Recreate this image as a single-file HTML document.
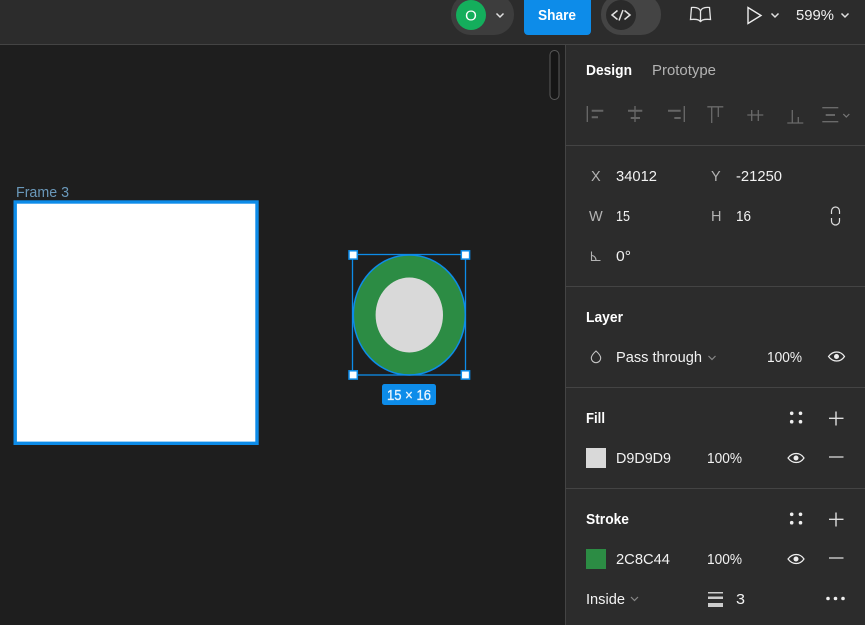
<!DOCTYPE html>
<html><head><meta charset="utf-8"><style>
html,body{margin:0;padding:0;background:#1e1e1e;width:865px;height:625px;overflow:hidden}
svg{display:block}
text{font-family:"Liberation Sans",sans-serif;font-size:14.500px;fill:#f2f2f2}
.b{font-weight:700;fill:#fff}
.m{fill:#b3b3b3}
.g{fill:none;stroke:#666;stroke-width:2}
.t{fill:none;stroke:#6a6a6a;stroke-width:1.300}
.c{fill:none;stroke:#e0e0e0;stroke-width:1.500}
.l{fill:#444}
</style></head><body>
<svg width="865" height="625" viewBox="0 0 865 625" xmlns="http://www.w3.org/2000/svg">
<rect width="865" height="625" fill="#1e1e1e"/>
<rect width="865" height="44" fill="#2c2c2c"/>
<rect y="44" width="865" height="1" fill="#444"/>
<rect x="565" y="45" width="300" height="580" fill="#2c2c2c"/>
<rect x="565" y="45" width="1" height="580" fill="#444"/>
<rect x="566" y="145" width="299" height="1" class="l"/>
<rect x="566" y="286" width="299" height="1" class="l"/>
<rect x="566" y="387" width="299" height="1" class="l"/>
<rect x="566" y="488" width="299" height="1" class="l"/>

<!-- top bar -->
<rect x="451" y="-6" width="63" height="41" rx="20" fill="#3d3d3d"/>
<circle cx="471" cy="15" r="15" fill="#14ae5c"/>
<text x="471" y="20.500" text-anchor="middle" style="font-size:15px;fill:#fff">O</text>
<path class="c" d="M496.500 13.500l3.500 3.500 3.500-3.500"/>
<path d="M524 0H591V31a4 4 0 0 1-4 4H528a4 4 0 0 1-4-4Z" fill="#0d8ce9"/>
<text x="538" y="20" class="b" textLength="38" lengthAdjust="spacingAndGlyphs">Share</text>
<rect x="601" y="-6" width="60" height="41" rx="20" fill="#444"/>
<circle cx="621" cy="15" r="15" fill="#2a2a2a"/>
<path class="c" d="M617.500 10.500l-5.500 4.500 5.500 4.500M624.500 10.500l5.500 4.500-5.500 4.500M623 10l-4 10.500"/>
<path d="M700.500 11c-1-2.500-4-4-9-3.500l-1 12q5-.5 8 .5l2 1.500 2-1.500q3-1 8-.5l-1-12c-5-.5-8 1-9 3.500ZM700.500 11v10" fill="none" stroke="#e6e6e6" stroke-width="1.300"/>
<path d="M748 7.500V23.500L761 15.500Z" fill="none" stroke="#eee" stroke-width="1.400"/>
<path class="c" d="M771.500 13.500l3.500 3.500 3.500-3.500"/>
<text x="796" y="20" textLength="38" lengthAdjust="spacingAndGlyphs">599%</text>
<path class="c" d="M841.500 13.500l3.500 3.500 3.500-3.500"/>

<!-- scrollbar -->
<rect x="550" y="50.500" width="9" height="49" rx="4.500" fill="#161616" stroke="#5a5a5a" stroke-width="1"/>

<!-- frame -->
<text x="16" y="197" style="fill:#6a98ba" textLength="53" lengthAdjust="spacingAndGlyphs">Frame 3</text>
<rect x="15.200" y="202" width="241.800" height="241.300" fill="#fff" stroke="#0d8ce9" stroke-width="3.400"/>

<!-- ellipse -->
<ellipse cx="409.300" cy="315" rx="56" ry="60" fill="#2c8c44" stroke="#0d8ce9" stroke-width="1.500"/>
<ellipse cx="409.300" cy="315" rx="33.700" ry="37.500" fill="#d9d9d9"/>
<rect x="352.500" y="254.500" width="113" height="120.500" fill="none" stroke="#0d8ce9" stroke-width="1.300"/>
<g fill="#fff" stroke="#0d8ce9" stroke-width="1.500">
<rect x="349" y="250.800" width="8.300" height="8.300"/>
<rect x="461.300" y="250.800" width="8.300" height="8.300"/>
<rect x="349" y="370.800" width="8.300" height="8.300"/>
<rect x="461.300" y="370.800" width="8.300" height="8.300"/>
</g>
<rect x="382" y="384" width="54" height="21" rx="2.500" fill="#0d8ce9"/>
<text x="387" y="400" style="fill:#e8f4fd;stroke:#e8f4fd;stroke-width:.300" textLength="44" lengthAdjust="spacingAndGlyphs">15 × 16</text>

<!-- tabs -->
<text x="586" y="75" class="b" textLength="46" lengthAdjust="spacingAndGlyphs">Design</text>
<text x="652" y="75" class="m" textLength="64" lengthAdjust="spacingAndGlyphs">Prototype</text>

<!-- align icons -->
<path class="t" d="M587.300 106v16M635 106v16M684.300 106v16M707.300 106.800h16M711.700 107v16M718.300 107v10M747.300 115h16M751.700 110v11M758.300 110v11M787.300 123h16M792.300 110v13M798.300 117v6M822.300 107.700h16M822.300 121.700h16"/>
<path class="g" d="M591.700 110.800h11.600M591.700 117.200h6.300M628 110.800h14.300M630.700 118h9.300M668 110.800h12.700M674.300 118h6.400M825.700 115h9.300"/>
<path d="M843.300 114l3 3 3-3" fill="none" stroke="#777" stroke-width="1.200"/>

<!-- xywh -->
<text x="591" y="181" class="m">X</text>
<text x="616" y="181" textLength="41" lengthAdjust="spacingAndGlyphs">34012</text>
<text x="711" y="181" class="m">Y</text>
<text x="736" y="181" textLength="46" lengthAdjust="spacingAndGlyphs">-21250</text>
<text x="589" y="221" class="m">W</text>
<text x="616" y="221" textLength="14" lengthAdjust="spacingAndGlyphs">15</text>
<text x="711" y="221" class="m">H</text>
<text x="736" y="221" textLength="15" lengthAdjust="spacingAndGlyphs">16</text>
<path d="M831.500 214v-3a4 4 0 0 1 8 0v3M831.500 218v3a4 4 0 0 0 8 0v-3" fill="none" stroke="#ddd" stroke-width="1.200"/>
<path d="M591.500 251.500v9h9M591.500 255.500c2.500 0 4.500 2 4.500 5" fill="none" stroke="#b3b3b3" stroke-width="1.100"/>
<text x="616" y="261" textLength="15" lengthAdjust="spacingAndGlyphs">0°</text>

<!-- layer -->
<text x="586" y="322" class="b" textLength="37" lengthAdjust="spacingAndGlyphs">Layer</text>
<path d="M596 351c2.800 2.500 4.700 4.800 4.700 7a4.700 4.700 0 0 1-9.400 0c0-2.200 1.900-4.500 4.700-7Z" fill="none" stroke="#c4c4c4" stroke-width="1.100"/>
<text x="616" y="362" textLength="86" lengthAdjust="spacingAndGlyphs">Pass through</text>
<path d="M708.500 356l3.500 3.500 3.500-3.500" fill="none" stroke="#888" stroke-width="1.200"/>
<text x="767" y="362" textLength="35" lengthAdjust="spacingAndGlyphs">100%</text>
<path d="M828.500 356.500c4.500-6 12-6 16 0-4 6-11.500 6-16 0Z" fill="none" stroke="#eee" stroke-width="1.200"/><circle cx="836.500" cy="356.500" r="2.500" fill="#eee"/>

<!-- fill -->
<text x="586" y="423" class="b" textLength="19" lengthAdjust="spacingAndGlyphs">Fill</text>
<g fill="#eee"><circle cx="791.700" cy="413.300" r="1.800"/><circle cx="800.500" cy="413.300" r="1.800"/><circle cx="791.700" cy="421.700" r="1.800"/><circle cx="800.500" cy="421.700" r="1.800"/></g>
<path d="M836 411.500v14M829 418.300h14.500" stroke="#ddd" stroke-width="1.400" fill="none"/>
<rect x="586" y="448" width="20" height="20" fill="#d9d9d9"/>
<text x="616" y="463" textLength="55" lengthAdjust="spacingAndGlyphs">D9D9D9</text>
<text x="707" y="463" textLength="35" lengthAdjust="spacingAndGlyphs">100%</text>
<path d="M788 458c4.500-6 12-6 16 0-4 6-11.500 6-16 0Z" fill="none" stroke="#eee" stroke-width="1.200"/><circle cx="796" cy="458" r="2.500" fill="#eee"/>
<path d="M829 457h14.500" stroke="#ccc" stroke-width="1.400"/>

<!-- stroke -->
<text x="586" y="524" class="b" textLength="43" lengthAdjust="spacingAndGlyphs">Stroke</text>
<g fill="#eee"><circle cx="791.700" cy="514.300" r="1.800"/><circle cx="800.500" cy="514.300" r="1.800"/><circle cx="791.700" cy="522.700" r="1.800"/><circle cx="800.500" cy="522.700" r="1.800"/></g>
<path d="M836 512.500v14M829 519.300h14.500" stroke="#ddd" stroke-width="1.400" fill="none"/>
<rect x="586" y="549" width="20" height="20" fill="#2c8c44"/>
<text x="616" y="564" textLength="54" lengthAdjust="spacingAndGlyphs">2C8C44</text>
<text x="707" y="564" textLength="35" lengthAdjust="spacingAndGlyphs">100%</text>
<path d="M788 559c4.500-6 12-6 16 0-4 6-11.500 6-16 0Z" fill="none" stroke="#eee" stroke-width="1.200"/><circle cx="796" cy="559" r="2.500" fill="#eee"/>
<path d="M829 558h14.500" stroke="#ccc" stroke-width="1.400"/>
<text x="586" y="604" textLength="39" lengthAdjust="spacingAndGlyphs">Inside</text>
<path d="M631 597l3.500 3.500 3.500-3.500" fill="none" stroke="#888" stroke-width="1.200"/>
<rect x="708" y="592" width="15" height="1.500" fill="#ccc"/>
<rect x="708" y="596.500" width="15" height="2.500" fill="#ccc"/>
<rect x="708" y="603" width="15" height="4" fill="#ccc"/>
<text x="736" y="604" textLength="9" lengthAdjust="spacingAndGlyphs">3</text>
<g fill="#eee"><circle cx="828" cy="598.500" r="1.800"/><circle cx="835.500" cy="598.500" r="1.800"/><circle cx="843" cy="598.500" r="1.800"/></g>
</svg>
</body></html>
